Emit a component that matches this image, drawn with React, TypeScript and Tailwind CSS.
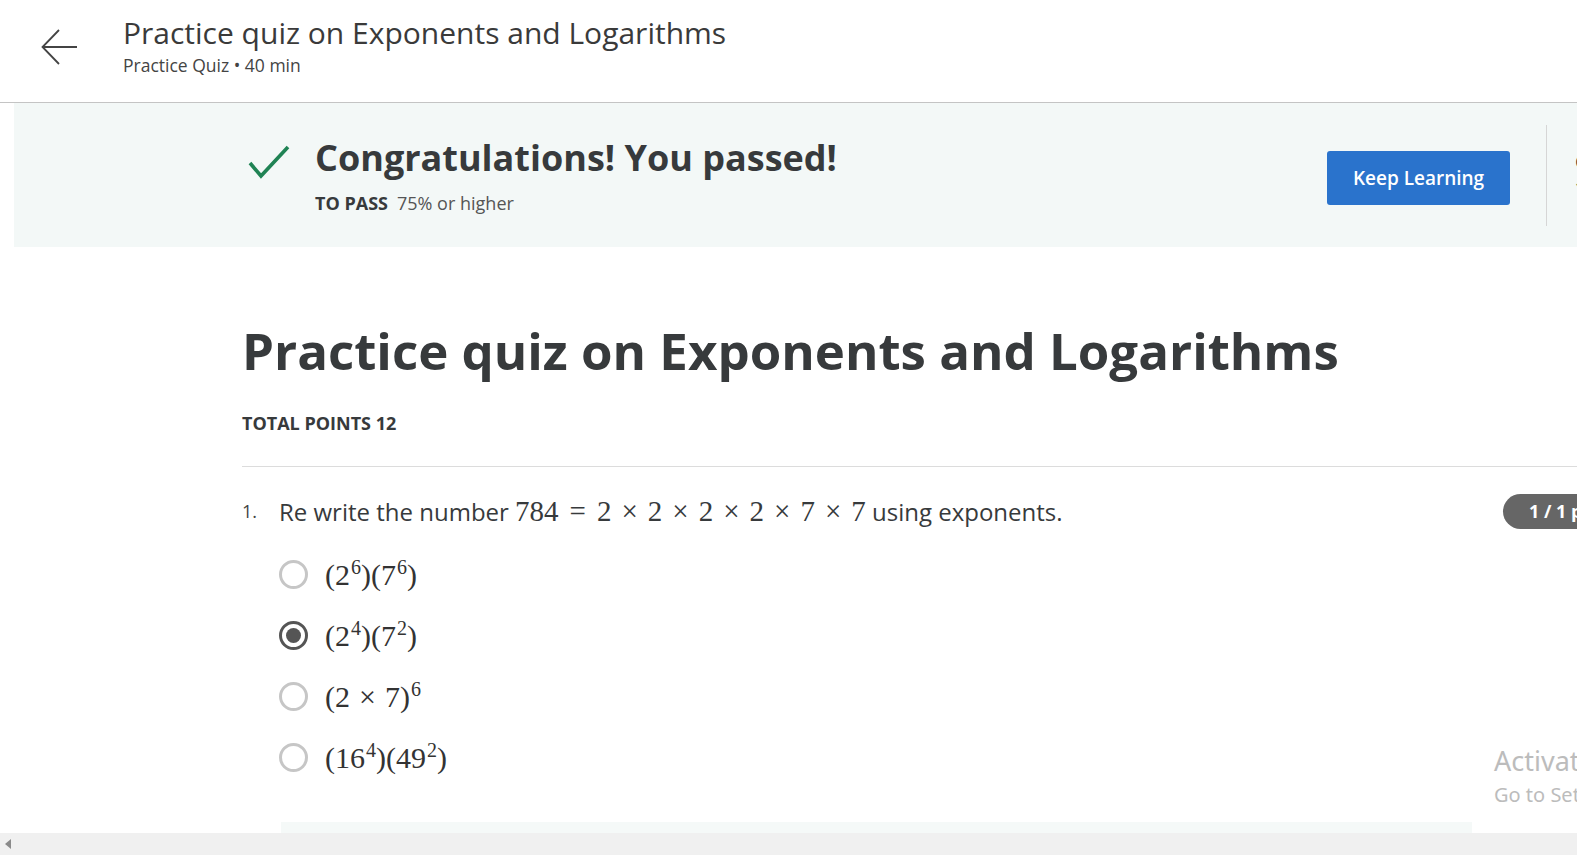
import React from "react";

const Sup = ({ children }: { children: React.ReactNode }) => (
	<sup className="text-[20px] relative -top-[11px] ml-[1px]">{children}</sup>
);

const options = [
	{ id: 1, selected: false, content: <>(2<Sup>6</Sup>)(7<Sup>6</Sup>)</> },
	{ id: 2, selected: true, content: <>(2<Sup>4</Sup>)(7<Sup>2</Sup>)</> },
	{ id: 3, selected: false, content: <>(2<span className="mx-[9px]">×</span>7)<Sup>6</Sup></> },
	{ id: 4, selected: false, content: <>(16<Sup>4</Sup>)(49<Sup>2</Sup>)</> },
];

function Radio({ selected }: { selected: boolean }) {
	if (selected) {
		return (
			<div className="w-[29px] h-[29px] shrink-0 rounded-full border-[3px] border-[#555] flex items-center justify-center">
				<div className="w-[15px] h-[15px] rounded-full bg-[#555]" />
			</div>
		);
	}
	return <div className="w-[29px] h-[29px] shrink-0 rounded-full border-[3px] border-[#c6c6c6]" />;
}

export default function App() {
	return (
		<div className="w-[1577px] h-[855px] overflow-hidden relative bg-white flex flex-col font-['Open_Sans',sans-serif] text-[#373a3c]">

			<header className="h-[103px] shrink-0 border-b border-[#c4c4c4] flex items-start">
				<div className="w-[122px] pt-[29px] pl-[41px]">
					<svg width="37" height="36" viewBox="0 0 37 36" fill="none" stroke="#444" strokeWidth="1.8">
						<path d="M36 18H2" />
						<path d="M18 1L1.5 18L18 35" />
					</svg>
				</div>
				<div className="pt-[13px] pl-[1px]">
					<h1 className="text-[30px] leading-[40px] text-[#3a3a3a]">Practice quiz on Exponents and Logarithms</h1>
					<p className="text-[17.5px] leading-[24px] text-[#444]">Practice Quiz • 40 min</p>
				</div>
			</header>

			<section className="ml-[14px] h-[144px] shrink-0 bg-[#f3f8f7] flex items-center overflow-hidden">
				<div className="pl-[234px] flex items-start w-[1313px] shrink-0">
					<svg width="42" height="34" viewBox="0 0 42 34" fill="none" stroke="#1f8354" strokeWidth="3.6" className="mt-[9px]">
						<path d="M2 18L13 31L40 2" />
					</svg>
					<div className="ml-[25px]">
						<h2 className="text-[36px] leading-[44px] font-bold text-[#373a3c]">Congratulations! You passed!</h2>
						<p className="mt-[11px] text-[18px] leading-[24px]">
							<span className="font-bold">TO PASS</span>
							<span className="ml-[9px] text-[#555]">75% or higher</span>
						</p>
					</div>
				</div>
				<button className="mt-[6px] shrink-0 w-[183px] h-[54px] rounded-[3px] bg-[#2a73cc] text-white text-[19px] font-semibold">Keep Learning</button>
				<div className="ml-[36px] shrink-0 w-px h-[101px] bg-[#d6d6d6]" />
				<div className="ml-[28px] shrink-0 flex flex-col text-[20px] leading-[26px] whitespace-nowrap">
					<span className="font-bold text-[#373a3c]">Grade</span>
					<span className="font-bold text-[#1f8354]">100%</span>
				</div>
			</section>

			<main className="pl-[242px] w-[1700px] shrink-0">
				<h1 className="mt-[71px] text-[51px] leading-[64px] font-bold text-[#373a3c]">Practice quiz on Exponents and Logarithms</h1>
				<p className="mt-[29px] text-[18px] leading-[24px] font-bold">TOTAL POINTS 12</p>
				<div className="mt-[31px] h-px bg-[#dcdcdc]" />

				<div className="mt-[27px] flex items-start">
					<span className="w-[37px] shrink-0 text-[18px] leading-[34px] text-[#444]">1.</span>
					<p className="w-[1224px] shrink-0 text-[24px] leading-[34px] text-[#373a3c] whitespace-nowrap">
						Re write the number{" "}
						<span className="font-['Liberation_Serif',serif] text-[29px]">
							784<span className="mx-[11px]">=</span>2<span className="mx-[10px]">×</span>2<span className="mx-[10px]">×</span>2<span className="mx-[10px]">×</span>2<span className="mx-[10px]">×</span>7<span className="mx-[10px]">×</span>7
						</span>{" "}
						using exponents.
					</p>
					<span className="shrink-0 h-[35px] px-[26px] rounded-full bg-[#666] text-white text-[18px] font-bold flex items-center whitespace-nowrap">1 / 1 point</span>
				</div>

				<div className="mt-[31px] ml-[37px] flex flex-col gap-[32px]">
					{options.map((o) => (
						<label key={o.id} className="flex items-center h-[29px]">
							<Radio selected={o.selected} />
							<span className="ml-[17px] font-['Liberation_Serif',serif] text-[30px] leading-[34px] text-[#333] whitespace-nowrap">{o.content}</span>
						</label>
					))}
				</div>
			</main>

			<div className="mt-auto h-[11px] ml-[281px] w-[1191px] bg-[#f5f9f8] shrink-0" />
			<div className="h-[22px] bg-[#f0f0f0] shrink-0 flex items-center pl-[5px]">
				<svg width="6" height="10" viewBox="0 0 6 10">
					<path d="M6 0L0 5L6 10Z" fill="#8a8a8a" />
				</svg>
			</div>

			<div className="absolute left-[1494px] top-[743px] font-['Noto_Sans',sans-serif] text-[#bcbcbc] whitespace-nowrap">
				<p className="text-[27px] leading-[36px]">Activate Windows</p>
				<p className="text-[20px] leading-[28px] mt-[2px]">Go to Settings to activate Windows.</p>
			</div>
		</div>
	);
}
